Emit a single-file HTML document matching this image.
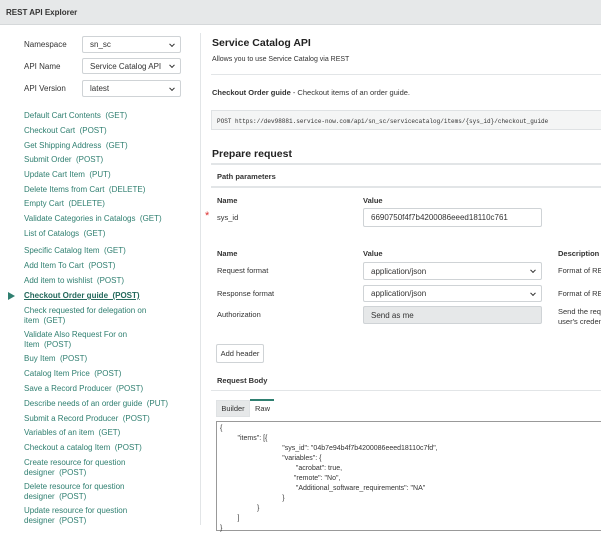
<!DOCTYPE html>
<html><head><style>
*{margin:0;padding:0;box-sizing:border-box}
body{width:601px;height:525px;overflow:hidden;background:#fff;font-family:"Liberation Sans",sans-serif;font-size:8px;color:#333;position:relative}
.a{position:absolute;white-space:nowrap}
.hdr{position:absolute;left:0;top:0;width:601px;height:25px;background:#e6e8e9;border-bottom:1px solid #d5d8da}
.l{color:#2f7f70;font-size:8px;position:absolute;left:24px;line-height:9.5px}
.sel{position:absolute;border:1px solid #cfd3d6;border-radius:2px;background:#fff;font-size:8px;color:#333;padding-left:7px;display:flex;align-items:center}
.sel .c{position:absolute;right:6px;top:50%;width:4px;height:4px;border-right:1.3px solid #333;border-bottom:1.3px solid #333;transform:translateY(-70%) rotate(45deg)}
.hr{position:absolute;height:1px;background:#e2e5e7}
.b{font-weight:bold}
</style></head><body>
<div class="hdr"></div>
<div class="a b" style="left:6px;top:8px;font-size:8px;color:#333">REST API Explorer</div>
<div style="position:absolute;left:200px;top:33px;width:1px;height:492px;background:#e2e5e7"></div>

<div class="a" style="left:24px;top:40px">Namespace</div>
<div class="sel" style="left:82px;top:36px;width:99px;height:17px">sn_sc<span class="c"></span></div>
<div class="a" style="left:24px;top:62px">API Name</div>
<div class="sel" style="left:82px;top:58px;width:99px;height:16px">Service Catalog API<span class="c"></span></div>
<div class="a" style="left:24px;top:84px">API Version</div>
<div class="sel" style="left:82px;top:80px;width:99px;height:17px">latest<span class="c"></span></div>

<div class="l" style="top:111px">Default Cart Contents&nbsp; (GET)</div>
<div class="l" style="top:126px">Checkout Cart&nbsp; (POST)</div>
<div class="l" style="top:141px">Get Shipping Address&nbsp; (GET)</div>
<div class="l" style="top:155px">Submit Order&nbsp; (POST)</div>
<div class="l" style="top:170px">Update Cart Item&nbsp; (PUT)</div>
<div class="l" style="top:185px">Delete Items from Cart&nbsp; (DELETE)</div>
<div class="l" style="top:199px">Empty Cart&nbsp; (DELETE)</div>
<div class="l" style="top:214px">Validate Categories in Catalogs&nbsp; (GET)</div>
<div class="l" style="top:229px">List of Catalogs&nbsp; (GET)</div>
<div class="l" style="top:246px">Specific Catalog Item&nbsp; (GET)</div>
<div class="l" style="top:261px">Add Item To Cart&nbsp; (POST)</div>
<div class="l" style="top:276px">Add item to wishlist&nbsp; (POST)</div>
<div class="a" style="left:8px;top:292px;width:0;height:0;border-left:7px solid #2f7f70;border-top:4px solid transparent;border-bottom:4px solid transparent"></div>
<div class="l b" style="top:291px;text-decoration:underline;color:#24695c">Checkout Order guide&nbsp; (POST)</div>
<div class="l" style="top:306px">Check requested for delegation on<br>item&nbsp; (GET)</div>
<div class="l" style="top:330px">Validate Also Request For on<br>Item&nbsp; (POST)</div>
<div class="l" style="top:354px">Buy Item&nbsp; (POST)</div>
<div class="l" style="top:369px">Catalog Item Price&nbsp; (POST)</div>
<div class="l" style="top:384px">Save a Record Producer&nbsp; (POST)</div>
<div class="l" style="top:399px">Describe needs of an order guide&nbsp; (PUT)</div>
<div class="l" style="top:414px">Submit a Record Producer&nbsp; (POST)</div>
<div class="l" style="top:428px">Variables of an item&nbsp; (GET)</div>
<div class="l" style="top:443px">Checkout a catalog Item&nbsp; (POST)</div>
<div class="l" style="top:458px">Create resource for question<br>designer&nbsp; (POST)</div>
<div class="l" style="top:482px">Delete resource for question<br>designer&nbsp; (POST)</div>
<div class="l" style="top:506px">Update resource for question<br>designer&nbsp; (POST)</div>

<div class="a b" style="left:212px;top:37px;font-size:10.5px;color:#222">Service Catalog API</div>
<div class="a" style="left:212px;top:56px;font-size:7px">Allows you to use Service Catalog via REST</div>
<div class="hr" style="left:211px;top:74px;width:390px"></div>
<div class="a" style="left:212px;top:88px;font-size:7.5px"><b>Checkout Order guide</b> - Checkout items of an order guide.</div>
<div style="position:absolute;left:211px;top:110px;width:395px;height:20px;background:#f4f5f5;border:1px solid #dfe2e4;font-family:'Liberation Mono',monospace;font-size:6px;padding:7px 0 0 5px;white-space:nowrap">POST https://dev98881.service-now.com/api/sn_sc/servicecatalog/items/{sys_id}/checkout_guide</div>
<div class="a b" style="left:212px;top:148px;font-size:10.5px;color:#222">Prepare request</div>
<div class="hr" style="left:211px;top:163px;width:390px;height:2px"></div>
<div class="a b" style="left:217px;top:172px;font-size:7.5px">Path parameters</div>
<div class="hr" style="left:211px;top:186px;width:390px;height:2px"></div>
<div class="a b" style="left:217px;top:196px;font-size:7.5px">Name</div>
<div class="a b" style="left:363px;top:196px;font-size:7.5px">Value</div>
<div class="a" style="left:205px;top:211px;color:#d33;font-size:11px;line-height:10px">*</div>
<div class="a" style="left:217px;top:213px;font-size:7.5px">sys_id</div>
<div class="sel" style="left:363px;top:208px;width:179px;height:19px">6690750f4f7b4200086eeed18110c761</div>

<div class="a b" style="left:217px;top:249px;font-size:7.5px">Name</div>
<div class="a b" style="left:363px;top:249px;font-size:7.5px">Value</div>
<div class="a b" style="left:558px;top:249px;font-size:7.5px">Description</div>
<div class="a" style="left:217px;top:266px;font-size:7.5px">Request format</div>
<div class="sel" style="left:363px;top:262px;width:179px;height:18px">application/json<span class="c"></span></div>
<div class="a" style="left:558px;top:266px;font-size:7.5px">Format of REST</div>
<div class="a" style="left:217px;top:289px;font-size:7.5px">Response format</div>
<div class="sel" style="left:363px;top:285px;width:179px;height:17px">application/json<span class="c"></span></div>
<div class="a" style="left:558px;top:289px;font-size:7.5px">Format of REST</div>
<div class="a" style="left:217px;top:310px;font-size:7.5px">Authorization</div>
<div class="sel" style="left:363px;top:306px;width:179px;height:18px;background:#e6e8e9">Send as me</div>
<div class="a" style="left:558px;top:307px;font-size:7.5px;line-height:10px">Send the requ<br>user's credent</div>
<div style="position:absolute;left:216px;top:344px;width:48px;height:19px;border:1px solid #cfd3d6;border-radius:2px;font-size:7.5px;text-align:center;line-height:17px">Add header</div>
<div class="a b" style="left:217px;top:376px;font-size:7.5px">Request Body</div>
<div class="hr" style="left:211px;top:390px;width:390px"></div>
<div style="position:absolute;left:216px;top:400px;width:34px;height:17px;background:#e6e8e9;border:1px solid #dfe2e4;font-size:7.5px;text-align:center;line-height:15px">Builder</div>
<div style="position:absolute;left:250px;top:399px;width:24px;height:18px;border-top:2px solid #2f7f70;font-size:7.5px;padding-left:5px;line-height:15px">Raw</div>
<div style="position:absolute;left:216px;top:421px;width:390px;height:110px;border:1px solid #999;font-size:7px;line-height:10px;padding:2px 0 0 3px;white-space:pre;color:#333">{
         "items": [{
                                "sys_id": "04b7e94b4f7b4200086eeed18110c7fd",
                                "variables": {
                                       "acrobat": true,
                                      "remote": "No",
                                       "Additional_software_requirements": "NA"
                                }
                   }
         ]
}</div>
</body></html>
